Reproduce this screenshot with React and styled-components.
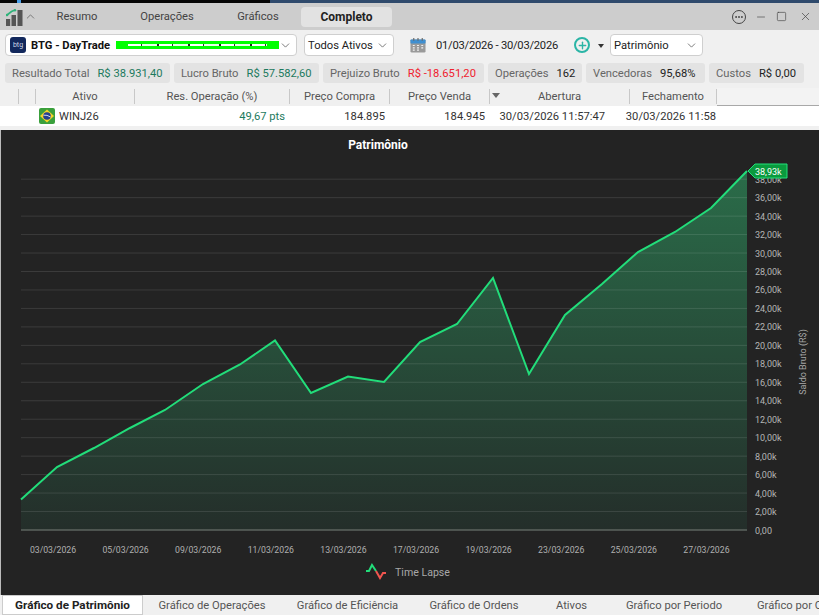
import React from 'react'
import styled, { createGlobalStyle } from 'styled-components'
import { ChevronDown, ChevronUp, Minus, Square, X, Ellipsis, Plus } from 'lucide-react'

const GlobalStyle = createGlobalStyle`
  html, body {
    margin: 0;
    padding: 0;
    background: #f0f0f0;
  }
  * { box-sizing: border-box; }
`

const Page = styled.div`
  width: 819px;
  height: 615px;
  overflow: hidden;
  display: flex;
  flex-direction: column;
  background: #f0f0f0;
  color: #222;
  font-family: Roboto, "Noto Sans", sans-serif;
  font-size: 11.2px;
  white-space: nowrap;
`
const TopStrip = styled.div`
  height: 3px;
  flex: none;
  background: linear-gradient(90deg, #060606 0 17px, #4a9fe8 17px 21px, #060606 21px 270px, #2f4a6c 270px);
`
const TitleBar = styled.header`
  height: 27px;
  flex: none;
  display: flex;
  align-items: center;
  background: #cdcdcd;
  padding-left: 6px;
  color: #444;
`
const Logo = styled.svg`
  width: 17px;
  height: 17px;
  margin-top: 1px;
`
const Collapse = styled.span`
  display: flex;
  margin-left: 1px;
  color: #666;
`
const NavTabs = styled.nav`
  display: flex;
  align-items: center;
  margin-left: -2px;
  height: 20px;
  margin-top: 1px;
`
const NavTab = styled.span`
  width: ${(p) => p.$w}px;
  height: 20px;
  line-height: 20px;
  text-align: center;
  border-radius: 4px;
  position: relative;
  font-size: ${(p) => (p.$active ? 12 : 11.2)}px;
  font-weight: ${(p) => (p.$active ? 700 : 400)};
  color: ${(p) => (p.$active ? '#222' : '#444')};
  background: ${(p) => (p.$active ? '#e2e2e2' : 'transparent')};
  & + &::before {
    content: ${(p) => (p.$active ? 'none' : '""')};
    position: absolute;
    left: 0;
    top: 3px;
    height: 13px;
    border-left: 1px solid #b8b8b8;
  }
`
const WindowButtons = styled.div`
  margin-left: auto;
  display: flex;
  align-items: center;
  gap: 9px;
  padding-right: 7px;
  color: #444;
`
const MoreButton = styled.span`
  width: 14px;
  height: 14px;
  border: 1.3px solid #444;
  border-radius: 50%;
  display: flex;
  align-items: center;
  justify-content: center;
`
const Toolbar = styled.div`
  height: 33px;
  flex: none;
  display: flex;
  align-items: center;
  padding: 0 0 3px 5px;
`
const Select = styled.div`
  width: ${(p) => p.$w}px;
  height: 22px;
  margin-left: ${(p) => p.$ml || 0}px;
  display: flex;
  align-items: center;
  padding: 0 4px 0 3px;
  background: #fff;
  border: 1px solid #cfcfcf;
  border-radius: 4px;
  color: #222;
  svg.chev {
    margin-left: auto;
    color: #555;
  }
`
const BrokerMark = styled.span`
  width: 16px;
  height: 16px;
  flex: none;
  margin-left: 1px;
  border-radius: 3px;
  background: #12285c;
  color: #cdd6ea;
  font-size: 7px;
  line-height: 16px;
  text-align: center;
`
const BrokerName = styled.strong`
  width: 80px;
  margin-left: 5px;
  color: #111;
`
const Masked = styled.span`
  width: 163px;
  height: 8px;
  margin-left: 5px;
  background: #00ff00;
  display: flex;
  align-items: center;
  &::after {
    content: "";
    width: 100%;
    height: 1.5px;
    margin: 0 12px;
    background: repeating-linear-gradient(90deg, #fff 0 13px, #333 13px 14px, #eaffea 14px 29px, #222 29px 31px);
  }
`
const DateRange = styled.span`
  width: 122px;
  margin-left: 10px;
  color: #222;
  letter-spacing: -0.25px;
`
const CaretDown = styled.span`
  width: 0;
  height: 0;
  margin: 1px 0 0 8px;
  border: 3px solid transparent;
  border-top: 4px solid #333;
  border-bottom: 0;
`
const AddButton = styled.span`
  width: 16px;
  height: 16px;
  margin-left: 16px;
  border: 2px solid #2bb5a6;
  border-radius: 50%;
  display: flex;
  align-items: center;
  justify-content: center;
  color: #2bb5a6;
`
const StatsRow = styled.div`
  height: 20px;
  flex: none;
  display: flex;
  gap: 4px;
  padding-left: 5px;
`
const Stat = styled.div`
  display: flex;
  align-items: center;
  gap: 8px;
  width: ${(p) => p.$w}px;
  padding-left: 7px;
  background: #e3e3e3;
  border-radius: 3px;
  color: #666;
`
const StatValue = styled.span`
  color: ${(p) => p.$color || '#222'};
`
const TableHead = styled.div`
  margin-top: 5px;
  height: 18px;
  flex: none;
  display: flex;
  color: #555;
`
const HeadCell = styled.div`
  width: ${(p) => p.$w}px;
  flex: none;
  height: 15px;
  line-height: 16px;
  margin-top: 1px;
  text-align: center;
  position: relative;
  border-right: 1px solid #c8c8c8;
  &:last-of-type { border-right: 0; }
`
const HeadFiller = styled.div`
  flex: 1;
  background: #f3f3f3;
  border-bottom: 1px solid #a8a8a8;
`
const SortMark = styled.span`
  position: absolute;
  left: 2px;
  top: 4px;
  border: 4px solid transparent;
  border-top: 5px solid #666;
  border-bottom: 0;
`
const TableRow = styled.div`
  height: 20px;
  flex: none;
  display: flex;
  align-items: center;
  background: #fff;
  color: #333;
`
const RowCell = styled.div`
  width: ${(p) => p.$w}px;
  flex: none;
  overflow: hidden;
  text-align: right;
  color: ${(p) => p.$color || '#333'};
`
const AssetCell = styled.div`
  width: 134px;
  flex: none;
  display: flex;
  align-items: center;
  gap: 4px;
  padding-left: 39px;
`
const ChartPanel = styled.section`
  margin-top: 4px;
  height: 465px;
  flex: none;
  background: #232323;
  border-left: 1px solid #bbb;
`
const ChartSvg = styled.svg`
  display: block;
  margin-left: -1px;
  font-family: Roboto, "Noto Sans", sans-serif;
`
const BottomTabs = styled.nav`
  height: 20px;
  flex: none;
  display: flex;
  align-items: center;
  padding-left: 2px;
  overflow: hidden;
  color: #555;
`
const BottomTab = styled.span`
  width: ${(p) => p.$w}px;
  flex: none;
  height: 20px;
  line-height: ${(p) => (p.$active ? 19 : 22)}px;
  text-align: ${(p) => (p.$clipped ? 'left' : 'center')};
  padding-left: ${(p) => (p.$clipped ? 18 : 0)}px;
  overflow: ${(p) => (p.$clipped ? 'hidden' : 'visible')};
  position: relative;
  font-size: ${(p) => (p.$active ? 11.7 : 11.2)}px;
  font-weight: ${(p) => (p.$active ? 700 : 400)};
  color: ${(p) => (p.$active ? '#222' : '#555')};
  background: ${(p) => (p.$active ? '#fff' : 'transparent')};
  border: ${(p) => (p.$active ? '1px solid #ccc' : '0')};
  & + &::before {
    content: ${(p) => (p.$first ? 'none' : '""')};
    position: absolute;
    left: 0;
    top: 6px;
    height: 11px;
    border-left: 1px solid #bdbdbd;
  }
`

const stats = [
  { label: 'Resultado Total', value: 'R$ 38.931,40', color: '#1d7a5e', w: 165 },
  { label: 'Lucro Bruto', value: 'R$ 57.582,60', color: '#1d7a5e', w: 145 },
  { label: 'Prejuizo Bruto', value: 'R$ -18.651,20', color: '#f0212e', w: 161 },
  { label: 'Operações', value: '162', w: 94 },
  { label: 'Vencedoras', value: '95,68%', w: 119 },
  { label: 'Custos', value: 'R$ 0,00', w: 95 },
]
const columns = [
  { label: '', w: 19 }, { label: '', w: 17 }, { label: 'Ativo', w: 99 },
  { label: 'Res. Operação (%)', w: 155 }, { label: 'Preço Compra', w: 100 },
  { label: 'Preço Venda', w: 100 }, { label: 'Abertura', w: 140, sort: true },
  { label: 'Fechamento', w: 87 },
]
const tabs = [
  { label: 'Gráfico de Patrimônio', w: 141, active: true },
  { label: 'Gráfico de Operações', w: 138, first: true },
  { label: 'Gráfico de Eficiência', w: 133 },
  { label: 'Gráfico de Ordens', w: 120 },
  { label: 'Ativos', w: 75 },
  { label: 'Gráfico por Periodo', w: 130 },
  { label: 'Gráfico por Operações', w: 80, clipped: true },
]
const points = [
  [21, 499.5], [57, 467], [94, 448], [130, 428], [165, 410], [203, 384], [240, 364.5],
  [275, 340.5], [311, 393], [348, 376.5], [384, 382], [420, 342], [457, 324], [493, 278],
  [529, 374], [565, 315], [602, 284], [638, 252], [675, 232], [711, 208], [747, 171],
]
const dates = ['03/03/2026', '05/03/2026', '09/03/2026', '11/03/2026', '13/03/2026',
  '17/03/2026', '19/03/2026', '23/03/2026', '25/03/2026', '27/03/2026']
const levels = Array.from({ length: 20 }, (_, i) => i * 2)
const yOf = (k) => 530 - k * 9.232
const line = points.map((p) => p.join(',')).join(' ')

function Chart() {
  return (
    <ChartSvg width="819" height="465" viewBox="0 130 819 465">
      <defs>
        <linearGradient id="area" x1="0" y1="0" x2="0" y2="1">
          <stop offset="0" stopColor="#2a6c49" />
          <stop offset="1" stopColor="#242e2a" />
        </linearGradient>
      </defs>
      <text x="378" y="149" fill="#fff" fontSize="12" fontWeight="700" textAnchor="middle">Patrimônio</text>
      <polygon points={`21,530 ${line} 747,530`} fill="url(#area)" />
      {levels.slice(1).map((k) => (
        <line key={k} x1="21" x2="747" y1={yOf(k)} y2={yOf(k)} stroke="#fff" strokeOpacity="0.11" />
      ))}
      <line x1="21" x2="747" y1="530" y2="530" stroke="#5d655f" strokeWidth="1.5" />
      <polyline points={line} fill="none" stroke="#22dd7a" strokeWidth="2" />
      {levels.map((k) => (
        <text key={k} x="755" y={yOf(k) + 3.5} fill="#b5b5b5" fontSize="9">
          {k === 0 ? '0,00' : `${k},00k`}
        </text>
      ))}
      <polygon points="748,171 755,164 787,164 787,178 755,178" fill="#0a9a3e" stroke="#22e07a" />
      <text x="755" y="174.5" fill="#fff" fontSize="9">38,93k</text>
      <text transform="translate(806 362) rotate(-90)" fill="#a5a5a5" fontSize="9" textAnchor="middle">Saldo Bruto (R$)</text>
      {dates.map((d, i) => (
        <text key={d} x={53 + i * 72.6} y="553" fill="#b0b0b0" fontSize="8.7" textAnchor="middle">{d}</text>
      ))}
      <polyline points="366,571 369,571 372,565 376,571" fill="none" stroke="#22dd7a" strokeWidth="2" />
      <polyline points="376,571 380,578 383,573 386,573" fill="none" stroke="#f0554f" strokeWidth="2" />
      <text x="395" y="576" fill="#a8a8a8" fontSize="10.6">Time Lapse</text>
    </ChartSvg>
  )
}

const Flag = () => (
  <svg width="16" height="16" viewBox="0 0 16 16">
    <rect width="16" height="16" rx="2" fill="#3aa03c" />
    <polygon points="8,1.5 15,8 8,14.5 1,8" fill="#f5d327" />
    <circle cx="8" cy="8" r="3.8" fill="#25408f" />
    <path d="M4.4 7.2 Q8 6.6 11.6 9" stroke="#fff" strokeWidth=".8" fill="none" />
  </svg>
)

const CalendarIcon = styled.svg`
  margin-left: 16px;
`
const Calendar = () => (
  <CalendarIcon width="16" height="17" viewBox="0 0 17 17">
    <rect x="0.5" y="2" width="16" height="14" rx="1.5" fill="#9a9a9a" />
    <rect x="0.5" y="2" width="16" height="4.5" rx="1" fill="#3f8fd0" />
    <path d="M4 .5v3M8.5 .5v3M13 .5v3" stroke="#666" strokeWidth="1.2" />
    <path d="M3 8.5h2M7.5 8.5h2M12 8.5h2M3 11h2M7.5 11h2M12 11h2M3 13.5h2M7.5 13.5h2" stroke="#f2f2f2" strokeWidth="1.3" />
  </CalendarIcon>
)

const CloseIcon = styled(X)`
  margin-left: 3px;
`

export default function App() {
  return (
    <Page>
      <GlobalStyle />
      <TopStrip />
      <TitleBar>
        <Logo viewBox="0 0 17 17">
          <rect x="0" y="10" width="4.2" height="7" fill="#555" />
          <rect x="5.5" y="6" width="4.5" height="11" fill="#555" />
          <rect x="11.5" y="1" width="5" height="16" fill="#555" />
          <path d="M1 6 L5.5 2.5 L9 1" stroke="#2eb37a" strokeWidth="1.6" fill="none" />
          <circle cx="1" cy="6" r="1.3" fill="#2eb37a" />
          <circle cx="9" cy="1.2" r="1.2" fill="#2eb37a" />
        </Logo>
        <Collapse><ChevronUp size={13} strokeWidth={1.5} /></Collapse>
        <NavTabs>
          <NavTab $w={84}>Resumo</NavTab>
          <NavTab $w={96}>Operações</NavTab>
          <NavTab $w={86}>Gráficos</NavTab>
          <NavTab $w={91} $active>Completo</NavTab>
        </NavTabs>
        <WindowButtons>
          <MoreButton><Ellipsis size={10} strokeWidth={2.5} /></MoreButton>
          <Minus size={12} strokeWidth={1.3} />
          <Square size={11} strokeWidth={1.4} />
          <CloseIcon size={13} strokeWidth={1.3} />
        </WindowButtons>
      </TitleBar>
      <Toolbar>
        <Select $w={292}>
          <BrokerMark>btg</BrokerMark>
          <BrokerName>BTG - DayTrade</BrokerName>
          <Masked />
          <ChevronDown className="chev" size={13} strokeWidth={1.4} />
        </Select>
        <Select $w={90} $ml={7}>
          Todos Ativos
          <ChevronDown className="chev" size={13} strokeWidth={1.4} />
        </Select>
        <Calendar />
        <DateRange>01/03/2026 - 30/03/2026</DateRange>
        <AddButton><Plus size={11} strokeWidth={3} /></AddButton>
        <CaretDown />
        <Select $w={93} $ml={6}>
          Patrimônio
          <ChevronDown className="chev" size={13} strokeWidth={1.4} />
        </Select>
      </Toolbar>
      <StatsRow>
        {stats.map((s) => (
          <Stat key={s.label} $w={s.w}>
            {s.label}
            <StatValue $color={s.color}>{s.value}</StatValue>
          </Stat>
        ))}
      </StatsRow>
      <TableHead>
        {columns.map((c, i) => (
          <HeadCell key={i} $w={c.w}>
            {c.sort && <SortMark />}
            {c.label}
          </HeadCell>
        ))}
        <HeadFiller />
      </TableHead>
      <TableRow>
        <AssetCell><Flag />WINJ26</AssetCell>
        <RowCell $w={151} $color="#1d7a5e">49,67 pts</RowCell>
        <RowCell $w={100}>184.895</RowCell>
        <RowCell $w={100}>184.945</RowCell>
        <RowCell $w={120}>30/03/2026 11:57:47</RowCell>
        <RowCell $w={111}>30/03/2026 11:58</RowCell>
      </TableRow>
      <ChartPanel>
        <Chart />
      </ChartPanel>
      <BottomTabs>
        {tabs.map((t) => (
          <BottomTab key={t.label} $w={t.w} $active={t.active} $first={t.first} $clipped={t.clipped}>{t.label}</BottomTab>
        ))}
      </BottomTabs>
    </Page>
  )
}
